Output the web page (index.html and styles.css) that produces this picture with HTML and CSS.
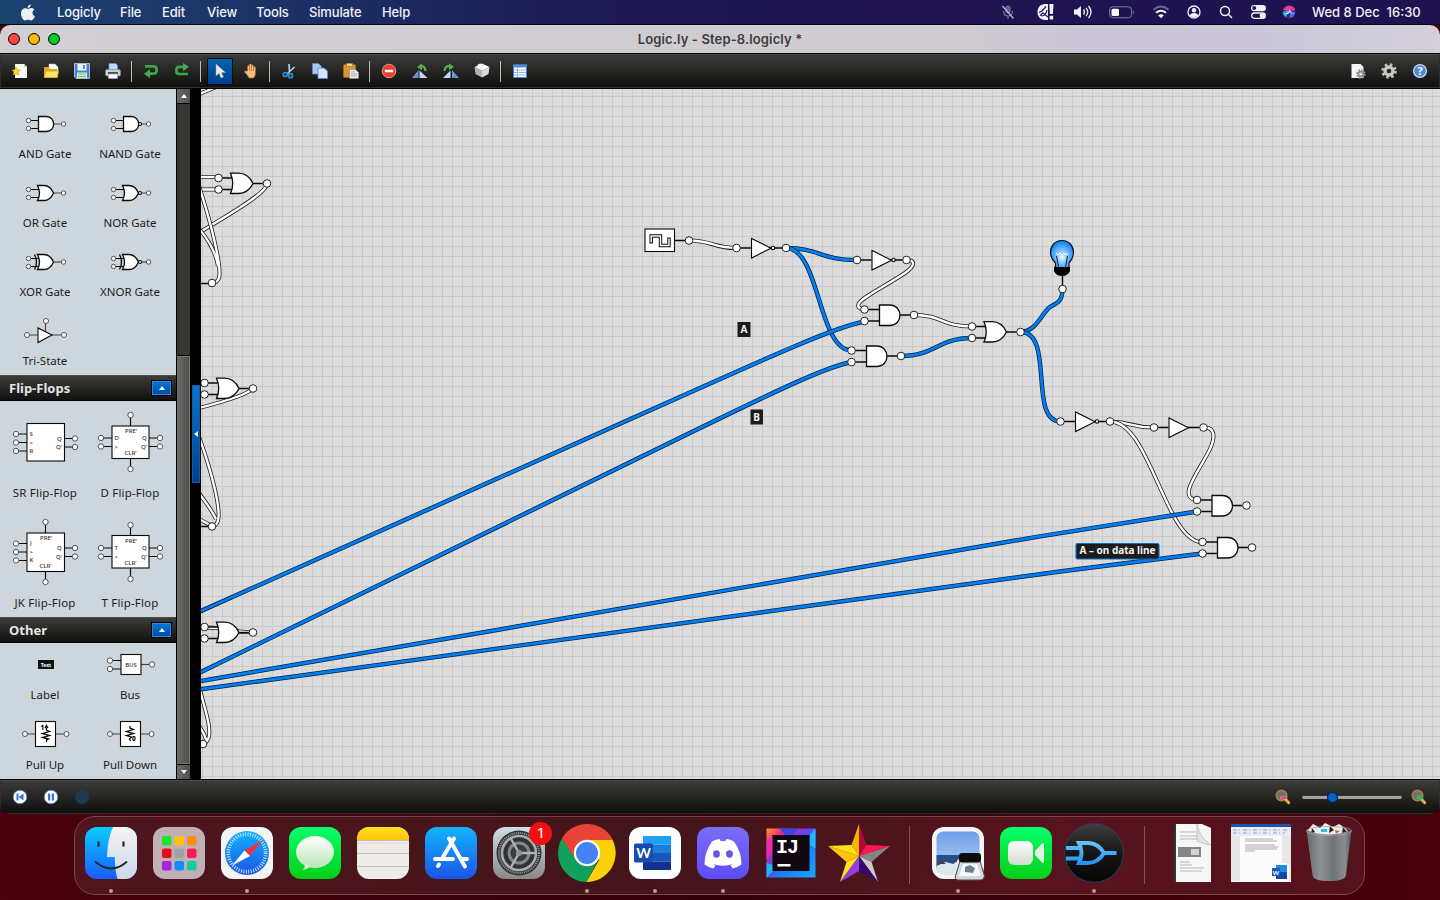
FILE: index.html
```html
<!DOCTYPE html>
<html lang="en">
<head>
<meta charset="utf-8">
<title>Logic.ly - Step-8.logicly *</title>
<link rel="stylesheet" href="styles.css">
</head>
<body>
<svg class="defs" width="0" height="0">
  <defs>
    <linearGradient id="gBlue" x1="0" y1="0" x2="0" y2="1"><stop offset="0" stop-color="#12b4fb"/><stop offset="1" stop-color="#1a55e6"/></linearGradient>
    <linearGradient id="gFinder" x1="0" y1="0" x2="0" y2="1"><stop offset="0" stop-color="#0accff"/><stop offset="1" stop-color="#1a5cff"/></linearGradient>
    <linearGradient id="gFace" x1="0" y1="0" x2="0" y2="1"><stop offset="0" stop-color="#f4f3f3"/><stop offset="1" stop-color="#cdd8e8"/></linearGradient>
    <linearGradient id="gGreen" x1="0" y1="0" x2="0" y2="1"><stop offset="0" stop-color="#06ff6c"/><stop offset="1" stop-color="#03cf16"/></linearGradient>
    <linearGradient id="gWhite" x1="0" y1="0" x2="0" y2="1"><stop offset="0" stop-color="#ffffff"/><stop offset="1" stop-color="#d0dcd0"/></linearGradient>
    <linearGradient id="gBubble" x1="0" y1="0" x2="0" y2="1"><stop offset="0" stop-color="#ffffff"/><stop offset="1" stop-color="#b9e6b9"/></linearGradient>
    <linearGradient id="gYellow" x1="0" y1="0" x2="0" y2="1"><stop offset="0" stop-color="#ffe21a"/><stop offset="1" stop-color="#ffc20a"/></linearGradient>
    <linearGradient id="gDiscord" x1="0" y1="0" x2="0" y2="1"><stop offset="0" stop-color="#7b6df5"/><stop offset="1" stop-color="#5b4df6"/></linearGradient>
    <linearGradient id="gMetal" x1="0" y1="0" x2="0" y2="1"><stop offset="0" stop-color="#cfdde5"/><stop offset="1" stop-color="#8b8987"/></linearGradient>
    <linearGradient id="gIJ" x1="0" y1="0" x2="1" y2="1"><stop offset="0" stop-color="#ff9a2a"/><stop offset=".2" stop-color="#f5257c"/><stop offset=".42" stop-color="#6a3df0"/><stop offset=".6" stop-color="#1d7cf5"/><stop offset="1" stop-color="#16a8f8"/></linearGradient>
    <linearGradient id="gSky" x1="0" y1="0" x2="0" y2="1"><stop offset="0" stop-color="#6e9fea"/><stop offset="1" stop-color="#b9d2f5"/></linearGradient>
    <linearGradient id="gBin" x1="0" y1="0" x2="1" y2="0"><stop offset="0" stop-color="#66696b"/><stop offset=".3" stop-color="#8d9193"/><stop offset=".6" stop-color="#6f7375"/><stop offset=".85" stop-color="#8a8e90"/><stop offset="1" stop-color="#55585a"/></linearGradient>
    <linearGradient id="gGate" gradientUnits="userSpaceOnUse" x1="0" y1="14" x2="0" y2="39"><stop offset="0" stop-color="#6cc4ff"/><stop offset="1" stop-color="#1e8cf5"/></linearGradient>
    <linearGradient id="gDisc" x1="0" y1="0" x2="0" y2="1"><stop offset="0" stop-color="#3d3d3f"/><stop offset=".5" stop-color="#161616"/><stop offset="1" stop-color="#050505"/></linearGradient>
    <radialGradient id="gBulb" cx=".5" cy=".6" r=".6"><stop offset="0" stop-color="#ffffff"/><stop offset=".35" stop-color="#8cc8ff"/><stop offset="1" stop-color="#0080f8"/></radialGradient>
    <pattern id="grid" x="202" y="96" width="10" height="10" patternUnits="userSpaceOnUse"><path class="grid-line" d="M0 0h10v1H1v9H0z"/></pattern>

    <g id="pin"><circle class="pin" r="3.800"/></g>
    <g id="and">
      <path class="lead" d="M-46 -5.500H-34M-46 6H-34M-14 0H-4"/>
      <path class="body" d="M-34.500 -10h10c14 0 14 20.500 0 20.500h-10z"/>
      <use href="#pin"/><use href="#pin" x="-49.500" y="-5.500"/><use href="#pin" x="-49.500" y="6"/>
    </g>
    <g id="or">
      <path class="lead" d="M-45 -5.500H-34M-45 6H-34M-14 0H-4"/>
      <path class="body" d="M-36.500 -10.300h8c8 0 12 5 14.500 10.300c-2.500 5 -6.500 10 -14.500 10h-8q4.500 -10 0 -20.300z"/>
      <use href="#pin"/><use href="#pin" x="-48.500" y="-5.500"/><use href="#pin" x="-48.500" y="6"/>
    </g>
    <g id="buf">
      <path class="lead" d="M-46 0H-35M-16 0H-4"/>
      <path class="body thin" d="M-34.500 -9.500V10L-15 .2z"/>
      <use href="#pin"/><use href="#pin" x="-49.500"/>
    </g>
    <g id="not"><use href="#buf"/><circle class="body thin" cx="-13" cy="0" r="1.700"/></g>

    <path id="w1" d="M689 240.500C712 240.500 713 248 736.500 248"/>
    <path id="w2" d="M786 248C820 248 820 260 857 260"/>
    <path id="w3" d="M786 248C820 248 818 350.500 851.500 350.500"/>
    <path id="w4" d="M906.500 260C916 260 915 266 905 273C884 287 862 297 858.500 304Q857 309 864.500 309.500"/>
    <path id="w5" d="M914 315C943 315 941 326.500 972 326.500"/>
    <path id="w6" d="M901 356C936 356 937 338 972 338"/>
    <path id="w7" d="M1020.500 332C1037 331 1040 315 1050 307C1056 303 1062.500 303 1062.500 289"/>
    <path id="w8" d="M1020.500 332C1055 332 1028 421.500 1060.500 421.500"/>
    <path id="w9" d="M195 613.700L630 419.300C780 352 835 327 864.500 321.500"/>
    <path id="w10" d="M195 675L698 429C790 384 830 366 851.500 362"/>
    <path id="w11" d="M195 682L1040 536.300L1197 511.500"/>
    <path id="w12" d="M195 690L1060 571.500L1202.500 553.500"/>
    <path id="w13" d="M1110 421.500C1130 421.500 1130 427.500 1154 427.500"/>
    <path id="w14" d="M1110 421.500C1150 421.500 1165 541 1202.500 542.500"/>
    <path id="w15" d="M1203.500 427.500C1216 427 1215 438 1210 449C1200 470 1176 498 1197 500"/>
    <path id="w16" d="M195 177h23M195 189.500h23M195 96L216 87"/>
    <path id="w17" d="M267 183.500C268 193 220 220 195 235"/>
    <path id="w18" d="M197 180C212 225 222 268 219 278Q217 283 212 283M195 225C206 235 216 252 218 266"/>
    <path id="w19" d="M253 388.500C246 396 215 404 195 409"/>
    <path id="w20" d="M198 434C212 472 222 512 217.500 522Q216 526 212 526M195 488Q212 510 216 519M195 517L212 526"/>
    <path id="w21" d="M199 686C204 707 212 728 208.500 738Q206 744 203 744M197 723Q204 732 206.500 741"/>
    <path id="w22" d="M204 627.500C225 627 230 632 253 632.500"/>
  </defs>
</svg>

<header class="menubar">
  <svg class="apple" width="16" height="20" viewBox="0 0 16 20"><path fill="#eceef2" d="M10.900 1.500c.1 1.900-1.600 3.600-3.300 3.500C7.400 3.200 9.100 1.600 10.900 1.500zM8 5.900c.9 0 1.700-.8 3.200-.8 1.300 0 2.500.7 3.100 1.700-2.700 1.500-2.200 5.300.6 6.400-.6 1.700-2.200 4.300-3.700 4.300-1.200 0-1.600-.7-3-.7s-1.900.7-3 .7C3 17.500 1 13.700 1 10.500 1 7.200 3.100 5.200 5.200 5.200 6.500 5.200 7.200 5.900 8 5.900z"/></svg>
  <nav class="menus"><span>Logicly</span><span>File</span><span>Edit</span><span>View</span><span>Tools</span><span>Simulate</span><span>Help</span></nav>
  <div class="tray">
    <svg width="14" height="16" viewBox="0 0 14 16"><g fill="none" stroke="#76709a" stroke-width="1.200"><rect x="5" y="2" width="4" height="7" rx="2" fill="#5e5788"/><path d="M2.500 7q0 5 4.500 5t4.500-5M7 12v3"/></g><path stroke="#b9b6ca" stroke-width="1.300" d="M1.500 2l11 12.500"/></svg>
    <svg width="18" height="17" viewBox="0 0 18 17"><path fill="#f0f0f5" d="M8 0h3v16H8C-2 16-2 0 8 0z"/><path fill="none" stroke="#23175a" stroke-width="1.200" d="M2 8.500l3-1.500 4-4.500M4 12q5 0 6-6M3 11.500l3-2.500 5 4"/><path fill="#f0f0f5" d="M12.300 0h4.200l-.6 10h-3zM12.600 11.800h3.600v3.700h-3.600z"/></svg>
    <svg width="20" height="14" viewBox="0 0 20 14"><path fill="#f0f0f5" d="M1 4.500h3l4-3.500v12L4 9.500H1z"/><path fill="none" stroke="#f0f0f5" stroke-width="1.300" d="M10.500 4.500q2 2.500 0 5M13 2.800q3.500 4.200 0 8.400M15.500 1q5 6 0 12"/></svg>
    <svg width="26" height="13" viewBox="0 0 26 13"><rect x=".6" y=".8" width="22" height="11" rx="3.200" fill="none" stroke="#837c9f"/><rect x="2.500" y="2.700" width="7.500" height="7.200" rx="1.500" fill="#fff"/><path fill="#837c9f" d="M24 4.500q2 1.800 0 3.600z"/></svg>
    <svg width="18" height="14" viewBox="0 0 18 14"><g fill="none" stroke-width="1.900"><path stroke="#6f688f" d="M1.500 4.700Q9-1.700 16.500 4.700"/><path stroke="#f0f0f5" d="M4 7.800q5-4 10 0"/></g><path fill="#f0f0f5" d="M6.200 10.200q2.800-2 5.600 0L9 13.200z"/></svg>
    <svg width="14" height="14" viewBox="0 0 14 14"><circle cx="7" cy="7" r="6" fill="none" stroke="#f0f0f5" stroke-width="1.300"/><circle cx="7" cy="5.200" r="2.200" fill="#f0f0f5"/><path fill="#f0f0f5" d="M3 10.800q0-2.800 4-2.800t4 2.800Q7 13.800 3 10.800z"/></svg>
    <svg width="14" height="14" viewBox="0 0 14 14"><g fill="none" stroke="#f0f0f5" stroke-width="1.500"><circle cx="6" cy="6" r="4.500"/><path d="M9.300 9.300L13 13"/></g></svg>
    <svg width="15" height="14" viewBox="0 0 15 14"><rect x="0" y="0" width="15" height="6.200" rx="3.100" fill="#f0f0f5"/><circle cx="3.200" cy="3.100" r="2" fill="#23175a"/><rect x=".7" y="8" width="13.600" height="5.300" rx="2.600" fill="none" stroke="#f0f0f5" stroke-width="1.300"/><circle cx="11.300" cy="10.600" r="2.600" fill="#f0f0f5"/></svg>
    <svg width="14" height="14" viewBox="0 0 14 14"><circle cx="7" cy="7" r="6.700" fill="#3a2a73"/><path fill="#e93a8d" d="M1 5Q4 0 9 1q4 1 4 4L7 6z"/><path fill="#27b7de" d="M1 7l6-2-3 7Q1 11 1 7z"/><path fill="#3d6cf0" d="M8 6l5 1q0 5-5 6z"/><path fill="#fff" d="M3 9q4-1 5-5 0 4 4 5-3 0-4-2-2 3-5 2z"/></svg>
    <span class="clock">Wed 8 Dec&nbsp; 16:30</span>
  </div>
</header>

<main class="window">
  <div class="titlebar">
    <div class="lights"><i class="red"></i><i class="amber"></i><i class="green"></i></div>
    <h1>Logic.ly - Step-8.logicly *</h1>
  </div>

  <div class="toolbar">
    <div class="tools">
      <span class="tool"><svg viewBox="0 0 16 16"><path fill="#f7f7f5" d="M3 1h9l3 3v11H3z"/><path fill="#ccc" d="M12 1v3h3z"/><path fill="#ffd91f" stroke="#c99700" stroke-width=".5" d="M4 4l1.300 2.700 3 .4-2.200 2 .6 3L4 10.700 1.300 12.100l.6-3L0 7.100l2.800-.4z"/></svg></span>
      <span class="tool"><svg viewBox="0 0 16 16"><path fill="#fff" stroke="#ccc" stroke-width=".5" d="M6 1h6l3 3v6H6z"/><path fill="#e0a81c" d="M1 4h5l1 2h7v9H1z"/><path fill="#ffe56b" stroke="#cf9a14" stroke-width=".7" d="M3 8h12.500l-1 6.500H1z"/></svg></span>
      <span class="tool"><svg viewBox="0 0 16 16"><path fill="#4d80d4" stroke="#bcd0f2" stroke-width=".8" d="M.5.500h15v15H2L.5 14z"/><path fill="#e9f0fa" d="M3.500 1h9v6.500h-9z"/><path fill="#5c8bd8" d="M9 2h2v4H9z"/><path fill="#e2f5d9" d="M3 9.500h10V15H3z"/><path stroke="#5fbf4c" d="M4 11h8M4 13.500h8"/></svg></span>
      <span class="tool"><svg viewBox="0 0 16 16"><path fill="#b9dcff" stroke="#5f94cf" stroke-width=".7" d="M4 .5h7l1.500 2V8H4z"/><rect x=".5" y="6.500" width="15" height="6.500" rx="1.500" fill="#cfcfcf" stroke="#888" stroke-width=".7"/><path fill="#4b4b4b" d="M3 9h10v2H3z"/><path fill="#f4f8ff" stroke="#8aa9d0" stroke-width=".6" d="M3.500 11h9v4.500h-9z"/></svg></span>
      <i class="sep"></i>
      <span class="tool"><svg viewBox="0 0 16 16"><path fill="none" stroke="#3fa545" stroke-width="2.700" d="M2 3.300h8.500q3.200 0 3.200 3.700t-3.200 3.700H6"/><path fill="#45ab4a" d="M7 6.300v9L1 10.800z"/></svg></span>
      <span class="tool"><svg viewBox="0 0 16 16"><path fill="none" stroke="#3fa545" stroke-width="2.700" d="M10 3.800H5.500q-3.200 0-3.200 3.600T5.500 11h8.500"/><path fill="#45ab4a" d="M9 0v8.200l6-4.400z"/></svg></span>
      <i class="sep"></i>
      <span class="tool selected"><svg viewBox="0 0 16 16"><path fill="#ececec" stroke="#999" stroke-width=".5" d="M4 1v12l3-2.800L9 15l2.500-1L9.500 9.500H13.500z"/></svg></span>
      <span class="tool"><svg viewBox="0 0 16 16"><path fill="#f2bd83" stroke="#a6622a" stroke-width=".8" d="M4.500 8V3q1-1.500 2 0V1.500q1-1.300 2 0V2.500q1.200-1 2 0V4q1.300-1 2 .3V10q0 3-2 5H6Q5 12.500 1.500 9q0-1.600 1.500-1z"/><path stroke="#a6622a" stroke-width=".7" d="M6.500 3v5M8.500 2.500V8M10.500 4v4"/></svg></span>
      <i class="sep"></i>
      <span class="tool"><svg viewBox="0 0 16 16"><path stroke="#a9d2ee" stroke-width="1.700" d="M8 1l.5 8M13.500 4L6 11"/><g fill="none" stroke="#2a8fd8" stroke-width="1.700"><circle cx="4.200" cy="11.500" r="2"/><circle cx="9.500" cy="12.700" r="2"/></g></svg></span>
      <span class="tool"><svg viewBox="0 0 16 16"><path fill="#a9c8ef" stroke="#5a89c9" stroke-width=".8" d="M.5.500h6l3 3v7.500h-9z"/><path fill="#d3e5fb" stroke="#5a89c9" stroke-width=".8" d="M6 5h6l3.500 3v7.500H6z"/></svg></span>
      <span class="tool"><svg viewBox="0 0 16 16"><rect x=".5" y="1.500" width="12" height="13" rx="1" fill="#d9952f" stroke="#9c6413" stroke-width=".8"/><rect x="3.500" y=".3" width="6" height="3" fill="#e8d28e" stroke="#8a7431" stroke-width=".5"/><path fill="#eeeeec" stroke="#888" stroke-width=".6" d="M6.500 6.500h6l3 3v6h-9z"/><path stroke="#999" stroke-width=".8" d="M8 9h4M8 11h6M8 13h6"/></svg></span>
      <i class="sep"></i>
      <span class="tool"><svg viewBox="0 0 16 16"><circle cx="8" cy="8" r="6.800" fill="#e8402f" stroke="#ffaaa0" stroke-width=".8"/><path fill="#fff" d="M3.800 6.800h8.400v2.500H3.800z"/></svg></span>
      <span class="tool"><svg viewBox="0 0 16 16"><path fill="#6894dc" d="M0 15L6.500 7v8z"/><path fill="#c5d9f7" d="M7.500 7.500L15.500 15h-8z"/><path fill="none" stroke="#4fb24f" stroke-width="2.300" d="M8 3.500Q13 2 13.500 8"/><path fill="#4fb24f" d="M5 4L10 .2v7z"/></svg></span>
      <span class="tool"><svg viewBox="0 0 16 16"><path fill="#c5d9f7" d="M0 15L7.500 7.500V15z"/><path fill="#6894dc" d="M9 7v8h7z"/><path fill="none" stroke="#4fb24f" stroke-width="2.300" d="M7.500 3.500Q2 2 1.500 8"/><path fill="#4fb24f" d="M11 4L6 .2v7z"/></svg></span>
      <span class="tool"><svg viewBox="0 0 16 16"><path fill="#f2f2f2" d="M8 .5l7.500 3.500L8 8 .5 4z"/><path fill="#b4b4b4" d="M.5 4L8 8v6.500L1.500 11z"/><path fill="#dadada" d="M15.500 4L8 8v6.500l6.500-3.500z"/><path fill="#fff" d="M3 2l3-1.500 2 1L5 3zM9 4.500l3-1.500 2 1-3 1.500z"/></svg></span>
      <i class="sep"></i>
      <span class="tool"><svg viewBox="0 0 16 16"><path fill="#fff" stroke="#4a83cc" d="M1.500 2h13v12.500h-13z"/><path fill="#4a8be0" d="M1 1.500h14v3H1z"/><path stroke="#8ab0dd" stroke-width=".9" d="M2 7h12M2 9.500h12M2 12h12M5.500 4.500V14"/></svg></span>
    </div>
    <div class="tools right">
      <span class="tool"><svg viewBox="0 0 16 16"><path fill="#f6f6f4" d="M1.500 1h9l3 3v11h-12z"/><circle cx="10.800" cy="11" r="3.600" fill="none" stroke="#999" stroke-width="2.400" stroke-dasharray="1.600 1.230"/><circle cx="10.800" cy="11" r="2.400" fill="#eee" stroke="#8a8a8a" stroke-width="1.600"/></svg></span>
      <span class="tool"><svg viewBox="0 0 16 16"><circle cx="8" cy="8" r="6.300" fill="none" stroke="#bdbdbb" stroke-width="3" stroke-dasharray="2.500 2.450"/><circle cx="8" cy="8" r="4" fill="none" stroke="#c9c9c6" stroke-width="3.300"/></svg></span>
      <span class="tool"><svg viewBox="0 0 16 16"><circle cx="8" cy="8" r="6.400" fill="#4f89d6" stroke="#c3dafa" stroke-width="1.300"/><text class="help" x="8" y="12" text-anchor="middle">?</text></svg></span>
    </div>
  </div>

  <div class="workspace">
    <aside class="palette">
      <section class="group gates">
        <figure><svg width="85" height="40" viewBox="3 104 85 40"><path class="plead" d="M30 120.500h9M30 128.500h9"/><path class="pout" d="M53 124h9"/><path class="body" d="M38.500 116.500h8c9.500 0 9.500 15 0 15h-8z"/><circle class="pp" cx="28.500" cy="120.500" r="2.200"/><circle class="pp" cx="28.500" cy="128.500" r="2.200"/><circle class="pp" cx="63.500" cy="124" r="2.200"/></svg><figcaption>AND Gate</figcaption></figure>
        <figure><svg width="85" height="40" viewBox="3 104 85 40"><path class="plead" d="M30 120.500h9M30 128.500h9"/><path class="pout" d="M53 124h9"/><path class="body" d="M38.500 116.500h8c9.500 0 9.500 15 0 15h-8z"/><circle class="body thin" cx="55" cy="124" r="1.500"/><circle class="pp" cx="28.500" cy="120.500" r="2.200"/><circle class="pp" cx="28.500" cy="128.500" r="2.200"/><circle class="pp" cx="63.500" cy="124" r="2.200"/></svg><figcaption>NAND Gate</figcaption></figure>
        <figure><svg width="85" height="40" viewBox="3 104 85 40"><path class="plead" d="M30 120.500h10M30 128.500h10"/><path class="pout" d="M53 124h9"/><path class="body" d="M37.500 116.500h6.500c5.500 0 8 4 9.500 7.500c-1.500 3.500-4 7.500-9.500 7.500h-6.500q4-7.500 0-15z"/><circle class="pp" cx="28.500" cy="120.500" r="2.200"/><circle class="pp" cx="28.500" cy="128.500" r="2.200"/><circle class="pp" cx="63.500" cy="124" r="2.200"/></svg><figcaption>OR Gate</figcaption></figure>
        <figure><svg width="85" height="40" viewBox="3 104 85 40"><path class="plead" d="M30 120.500h10M30 128.500h10"/><path class="pout" d="M53 124h9"/><path class="body" d="M37.500 116.500h6.500c5.500 0 8 4 9.500 7.500c-1.500 3.500-4 7.500-9.500 7.500h-6.500q4-7.500 0-15z"/><circle class="body thin" cx="55" cy="124" r="1.500"/><circle class="pp" cx="28.500" cy="120.500" r="2.200"/><circle class="pp" cx="28.500" cy="128.500" r="2.200"/><circle class="pp" cx="63.500" cy="124" r="2.200"/></svg><figcaption>NOR Gate</figcaption></figure>
        <figure><svg width="85" height="40" viewBox="3 104 85 40"><path class="plead" d="M30 120.500h10M30 128.500h10"/><path class="pout" d="M53 124h9"/><path class="body" d="M37.500 116.500h6.500c5.500 0 8 4 9.500 7.500c-1.500 3.500-4 7.500-9.500 7.500h-6.500q4-7.500 0-15z"/><path class="line" d="M34.500 116.500q4 7.500 0 15"/><circle class="pp" cx="28.500" cy="120.500" r="2.200"/><circle class="pp" cx="28.500" cy="128.500" r="2.200"/><circle class="pp" cx="63.500" cy="124" r="2.200"/></svg><figcaption>XOR Gate</figcaption></figure>
        <figure><svg width="85" height="40" viewBox="3 104 85 40"><path class="plead" d="M30 120.500h10M30 128.500h10"/><path class="pout" d="M53 124h9"/><path class="body" d="M37.500 116.500h6.500c5.500 0 8 4 9.500 7.500c-1.500 3.500-4 7.500-9.500 7.500h-6.500q4-7.500 0-15z"/><path class="line" d="M34.500 116.500q4 7.500 0 15"/><circle class="body thin" cx="55" cy="124" r="1.500"/><circle class="pp" cx="28.500" cy="120.500" r="2.200"/><circle class="pp" cx="28.500" cy="128.500" r="2.200"/><circle class="pp" cx="63.500" cy="124" r="2.200"/></svg><figcaption>XNOR Gate</figcaption></figure>
        <figure><svg width="85" height="40" viewBox="3 311 85 40"><path class="pout" d="M29 335h9M52 335h10M45.500 323v8"/><path class="body thin" d="M38 328v14.500L52 335z"/><circle class="pp" cx="27" cy="335" r="2.500"/><circle class="pp" cx="64" cy="335" r="2.500"/><circle class="pp" cx="46" cy="321" r="2.500"/></svg><figcaption>Tri-State</figcaption></figure>
      </section>

      <h2>Flip-Flops<span class="fold"></span></h2>
      <section class="group flops">
        <figure><svg class="ff" width="85" height="82" viewBox="3 401 85 82"><path class="plead" d="M18 434h9M18 442.500h9M18 451h9M64 438.500h9M64 447h9"/><rect class="body thin" x="27" y="423.500" width="37.500" height="37.500"/><circle class="pp" cx="16" cy="434" r="2.700"/><circle class="pp" cx="16" cy="442.500" r="2.700"/><circle class="pp" cx="16" cy="451" r="2.700"/><circle class="pp" cx="75" cy="438.500" r="2.700"/><circle class="pp" cx="75" cy="447" r="2.700"/><text x="29.500" y="436">S</text><text x="29.500" y="444.500">&gt;</text><text x="29.500" y="453">R</text><text x="57" y="440.500">Q</text><text x="56" y="449">Q'</text></svg><figcaption>SR Flip-Flop</figcaption></figure>
        <figure><svg class="ff" width="85" height="82" viewBox="3 401 85 82"><path class="plead" d="M18 438h9M18 446.500h9M64 438h9M64 446.500h9M45.500 417v9M45.500 458v9"/><rect class="body thin" x="27" y="426" width="37" height="32.500"/><circle class="pp" cx="16" cy="438" r="2.700"/><circle class="pp" cx="16" cy="446.500" r="2.700"/><circle class="pp" cx="75" cy="438" r="2.700"/><circle class="pp" cx="75" cy="446.500" r="2.700"/><circle class="pp" cx="45.500" cy="415" r="2.700"/><circle class="pp" cx="45.500" cy="469" r="2.700"/><text x="29.500" y="440">D</text><text x="29.500" y="448.500">&gt;</text><text x="57" y="440">Q</text><text x="56" y="448.500">Q'</text><text x="40" y="433">PRE'</text><text x="39.500" y="455">CLR'</text></svg><figcaption>D Flip-Flop</figcaption></figure>
        <figure><svg class="ff" width="85" height="82" viewBox="3 511 85 82"><path class="plead" d="M18 543.500h9M18 552h9M18 560.500h9M64 548h9M64 556.500h9M45.500 524v9M45.500 571v9"/><rect class="body thin" x="27" y="533" width="37.500" height="38.500"/><circle class="pp" cx="16" cy="543.500" r="2.700"/><circle class="pp" cx="16" cy="552" r="2.700"/><circle class="pp" cx="16" cy="560.500" r="2.700"/><circle class="pp" cx="75" cy="548" r="2.700"/><circle class="pp" cx="75" cy="556.500" r="2.700"/><circle class="pp" cx="45.500" cy="522" r="2.700"/><circle class="pp" cx="45.500" cy="582" r="2.700"/><text x="30" y="545">J</text><text x="29.500" y="554">&gt;</text><text x="29.500" y="562">K</text><text x="57" y="550">Q</text><text x="56" y="558.500">Q'</text><text x="40" y="540">PRE'</text><text x="39.500" y="568">CLR'</text></svg><figcaption>JK Flip-Flop</figcaption></figure>
        <figure><svg class="ff" width="85" height="82" viewBox="3 511 85 82"><path class="plead" d="M18 548h9M18 556.500h9M64 548h9M64 556.500h9M45.500 527v9M45.500 568v9"/><rect class="body thin" x="27" y="535.500" width="37" height="32.500"/><circle class="pp" cx="16" cy="548" r="2.700"/><circle class="pp" cx="16" cy="556.500" r="2.700"/><circle class="pp" cx="75" cy="548" r="2.700"/><circle class="pp" cx="75" cy="556.500" r="2.700"/><circle class="pp" cx="45.500" cy="525" r="2.700"/><circle class="pp" cx="45.500" cy="579" r="2.700"/><text x="29.500" y="550">T</text><text x="29.500" y="558.500">&gt;</text><text x="57" y="550">Q</text><text x="56" y="558.500">Q'</text><text x="40" y="543">PRE'</text><text x="39.500" y="565">CLR'</text></svg><figcaption>T Flip-Flop</figcaption></figure>
      </section>

      <h2>Other<span class="fold"></span></h2>
      <section class="group other">
        <figure><svg class="ff" width="85" height="42" viewBox="3 643 85 42"><rect x="38" y="660" width="16" height="9" fill="#111"/><text class="chip" x="46" y="666.500" text-anchor="middle">Text</text></svg><figcaption>Label</figcaption></figure>
        <figure><svg class="ff" width="85" height="42" viewBox="3 643 85 42"><path class="plead" d="M27 660.500h10M27 669h10"/><path class="pout" d="M56 664.500h9"/><rect class="body thin" x="36" y="654.500" width="20" height="20"/><circle class="pp" cx="25" cy="660.500" r="2.700"/><circle class="pp" cx="25" cy="669" r="2.700"/><circle class="pp" cx="67" cy="664.500" r="2.700"/><text x="46" y="666.500" text-anchor="middle">BUS</text></svg><figcaption>Bus</figcaption></figure>
        <figure><svg class="ff" width="85" height="42" viewBox="3 713 85 42"><path class="pout" d="M27 734h9M55 734h9"/><rect class="body thin" x="35.500" y="721.500" width="20" height="25"/><path class="line" d="M46 730l3.500 1.500-7 2 7 2-7 2 6 1.500-2 1v2M46.500 730v-2.500M45 728l1.500-2.500 1.500 2.500"/><text class="bold" x="40.500" y="730">1</text><circle class="pp" cx="25" cy="734" r="2.500"/><circle class="pp" cx="66.500" cy="734" r="2.500"/></svg><figcaption>Pull Up</figcaption></figure>
        <figure><svg class="ff" width="85" height="42" viewBox="3 713 85 42"><path class="pout" d="M27 734h9M55 734h9"/><rect class="body thin" x="35.500" y="721.500" width="20" height="25"/><path class="line" d="M45 726v2l3.500 1.500-7 2 7 2-7 2 5 1.500-2 2 1 2"/><text class="bold" x="47" y="741">0</text><circle class="pp" cx="25" cy="734" r="2.500"/><circle class="pp" cx="66.500" cy="734" r="2.500"/></svg><figcaption>Pull Down</figcaption></figure>
      </section>
    </aside>
    <div class="scrollbar"><i class="up"></i><i class="track"></i><i class="thumb"></i><i class="down"></i></div>
    <div class="splitter"><i></i></div>

    <svg class="canvas" width="1239" height="690" viewBox="201 89 1239 690">
      <rect x="201" y="89" width="1239" height="690" fill="url(#grid)"/>
      <path class="lead" d="M201 283.500h11M201 526.500h11M674 240.500h12M1062.500 276v10"/>
      <g class="off">
        <use href="#w16" class="edge"/><use href="#w16" class="core"/>
        <use href="#w17" class="edge"/><use href="#w17" class="core"/>
        <use href="#w18" class="edge"/><use href="#w18" class="core"/>
        <use href="#w19" class="edge"/><use href="#w19" class="core"/>
        <use href="#w20" class="edge"/><use href="#w20" class="core"/>
        <use href="#w21" class="edge"/><use href="#w21" class="core"/>
        <use href="#w22" class="edge"/><use href="#w22" class="core"/>
        <use href="#w1" class="edge"/><use href="#w1" class="core"/>
        <use href="#w4" class="edge"/><use href="#w4" class="core"/>
        <use href="#w5" class="edge"/><use href="#w5" class="core"/>
      </g>
      <g class="on">
        <use href="#w2" class="edge"/><use href="#w2" class="core"/>
        <use href="#w3" class="edge"/><use href="#w3" class="core"/>
        <use href="#w6" class="edge"/><use href="#w6" class="core"/>
        <use href="#w7" class="edge"/><use href="#w7" class="core"/>
        <use href="#w8" class="edge"/><use href="#w8" class="core"/>
        <use href="#w9" class="edge"/><use href="#w9" class="core"/>
        <use href="#w10" class="edge"/><use href="#w10" class="core"/>
      </g>
      <g class="off">
        <use href="#w13" class="edge"/><use href="#w13" class="core"/>
        <use href="#w14" class="edge"/><use href="#w14" class="core"/>
        <use href="#w15" class="edge"/><use href="#w15" class="core"/>
      </g>
      <g class="on">
        <use href="#w11" class="edge"/><use href="#w11" class="core"/>
        <use href="#w12" class="edge"/><use href="#w12" class="core"/>
      </g>
      <use href="#or" x="267" y="183.500"/><use href="#or" x="253" y="388.500"/><use href="#or" x="253" y="632.500"/>
      <use href="#pin" x="212" y="283"/><use href="#pin" x="212" y="526.500"/><use href="#pin" x="203" y="744"/>
      <rect class="body thin" x="645" y="229" width="29.500" height="22.500"/>
      <path class="clock-edge" d="M651.200 243.500v-7.500h9.300v9.500h8.500v-8"/><path class="clock-core" d="M651.200 242.500v-6.500h9.300v9.500h8.500v-7"/>
      <use href="#pin" x="689" y="240.500"/>
      <use href="#not" x="786" y="248"/><use href="#not" x="906.500" y="260"/><use href="#not" x="1110" y="421.500"/><use href="#buf" x="1203.500" y="427.500"/>
      <use href="#and" x="914" y="315"/><use href="#and" x="901" y="356"/><use href="#and" x="1246.500" y="505.500"/><use href="#and" x="1252" y="547.500"/>
      <use href="#or" x="1020.500" y="332"/>
      <path fill="url(#gBulb)" stroke="#111" stroke-width="1.200" d="M1055.500 268v-5q-5-5-5-10.500c0-6 4-12 11.500-12s11.500 6 11.500 12q0 5.500-4.500 10.500v5z"/>
      <path fill="none" stroke="#123" d="M1058.500 267l-2-11M1065.500 267l2-11"/><path fill="none" stroke="#fff" d="M1056 253l2 2 2-2 2 2 2-2 2 2 2-2"/>
      <path fill="#000" d="M1054 267h16v4q-2 5-8 5t-8-5z"/>
      <use href="#pin" x="1062.500" y="289"/>
      <g class="label"><rect x="737.500" y="322" width="13" height="15"/><text x="744" y="333.300">A</text><rect x="750.500" y="409.500" width="12.500" height="15"/><text x="756.700" y="420.800">B</text>
      <rect class="chosen" x="1076" y="543.500" width="83" height="15.500"/><text x="1117.500" y="554.300" textLength="76">A – on data line</text></g>
    </svg>
  </div>

  <footer class="statusbar">
    <div class="tools">
      <span class="tool"><svg viewBox="0 0 16 16"><circle cx="8" cy="8" r="6.800" fill="#fff" stroke="#4a82cf" stroke-width=".8"/><path fill="#3675d0" d="M4.500 4.500h2v7h-2zM11.500 4.500v7l-5-3.500z"/></svg></span>
      <span class="tool"><svg viewBox="0 0 16 16"><circle cx="8" cy="8" r="6.800" fill="#fff" stroke="#4a82cf" stroke-width=".8"/><path fill="#3675d0" d="M5 4.500h2.200v7H5zM8.800 4.500H11v7H8.800z"/></svg></span>
      <span class="tool"><svg viewBox="0 0 16 16"><circle cx="8" cy="8" r="7" fill="#1d3a54"/></svg></span>
    </div>
    <div class="zoomer">
      <svg width="16" height="16" viewBox="0 0 16 16"><circle cx="6.500" cy="6.500" r="5.300" fill="#66727c" stroke="#bf8426" stroke-width="1.400"/><path stroke="#eaa757" stroke-width="3" stroke-linecap="round" d="M11 11l2.800 2.800"/><path fill="#f0343a" stroke="#fbb" stroke-width=".5" d="M5.500 7.700h6.500V10H5.500z"/></svg>
      <div class="slider"><i></i></div>
      <svg width="16" height="16" viewBox="0 0 16 16"><circle cx="6.500" cy="6.500" r="5.300" fill="#66727c" stroke="#bf8426" stroke-width="1.400"/><path stroke="#eaa757" stroke-width="3" stroke-linecap="round" d="M11 11l2.800 2.800"/><path stroke="#35b556" stroke-width="2.400" d="M9 5.500v6.500M5.700 8.700h6.600"/></svg>
    </div>
  </footer>
</main>

<div class="dock">
  <span class="app run"><svg viewBox="0 0 52 52"><rect width="52" height="52" rx="12" fill="url(#gFinder)"/><path fill="url(#gFace)" d="M28 0h12a12 12 0 0 1 12 12v28a12 12 0 0 1-12 12h-7.500q-2.500-8-2.800-22H22Q22.500 12 28 0z"/><path fill="none" stroke="#20252c" stroke-width="1.800" stroke-linecap="round" d="M10.500 35q16 13 31 0"/><path stroke="#20252c" stroke-width="2.200" d="M13.500 14.500v5M38.500 14.500v5"/></svg></span>
  <span class="app"><svg viewBox="0 0 52 52"><rect width="52" height="52" rx="12" fill="#c0b0b6"/><rect x="9" y="9" width="9.500" height="9.500" rx="2" fill="#16e52c"/><rect x="21.500" y="9" width="9.500" height="9.500" rx="2" fill="#fcc00e"/><rect x="34" y="9" width="9.500" height="9.500" rx="2" fill="#fd8d0c"/><rect x="9" y="21.500" width="9.500" height="9.500" rx="2" fill="#e80d16"/><rect x="21.500" y="21.500" width="9.500" height="9.500" rx="2" fill="#9aa3a8"/><rect x="34" y="21.500" width="9.500" height="9.500" rx="2" fill="#fb1c55"/><rect x="9" y="34" width="9.500" height="9.500" rx="2" fill="#a823dc"/><rect x="21.500" y="34" width="9.500" height="9.500" rx="2" fill="#118cfb"/><rect x="34" y="34" width="9.500" height="9.500" rx="2" fill="#13cc97"/></svg></span>
  <span class="app run"><svg viewBox="0 0 52 52"><rect width="52" height="52" rx="12" fill="#f4f4f4"/><circle cx="26" cy="26" r="22" fill="url(#gBlue)"/><circle cx="26" cy="26" r="18.700" fill="none" stroke="#d9efff" stroke-width="3.600" stroke-dasharray=".9 1.550"/><path fill="#f5303a" d="M42 13L29 29l-5.500-5.500z"/><path fill="#fff" d="M11 38.500L23.500 23.500 29 29z"/></svg></span>
  <span class="app"><svg viewBox="0 0 52 52"><rect width="52" height="52" rx="12" fill="url(#gGreen)"/><ellipse cx="26" cy="25" rx="19" ry="16" fill="url(#gBubble)"/><path fill="#d3f1d3" d="M16 37q0 4-2.500 6 5-.5 8-4z"/></svg></span>
  <span class="app"><svg viewBox="0 0 52 52"><rect width="52" height="52" rx="12" fill="#eeece9"/><path fill="url(#gYellow)" d="M0 13v-1A12 12 0 0 1 12 0h28a12 12 0 0 1 12 12v1z"/><path stroke="#c4c0bc" d="M0 13.500h52M0 26.500h52M0 39.500h52"/><path stroke="#bcb8b3" stroke-dasharray="1 1.500" d="M1 16h50"/></svg></span>
  <span class="app"><svg viewBox="0 0 52 52"><rect width="52" height="52" rx="12" fill="url(#gBlue)"/><g stroke="#fff" stroke-width="4" stroke-linecap="round"><path d="M29 11.500L18 30M24 11.500l16 28M10 32h18M36 32h6M14 37.500l-1 1.500"/></g></svg></span>
  <span class="app"><svg viewBox="0 0 52 52"><rect width="52" height="52" rx="12" fill="url(#gMetal)"/><circle cx="26" cy="26" r="22.500" fill="#303234"/><circle cx="26" cy="26" r="20" fill="none" stroke="#999c9e" stroke-width="2" stroke-dasharray="1.100 1"/><circle cx="26" cy="26" r="17" fill="none" stroke="#a9abac" stroke-width="2.600"/><circle cx="26" cy="26" r="10" fill="#3a3c3e" stroke="#85888a" stroke-width="3"/><path stroke="#b0b2b3" stroke-width="2.400" d="M26 26h17M26 26l-8.500-15M26 26l-8.500 15"/><circle cx="26" cy="26" r="3" fill="#909395"/></svg><b class="badge">1</b></span>
  <span class="app run"><svg viewBox="0 0 52 52"><path fill="#ea4335" d="M.9 11.500A29 29 0 0 1 51.200 11.500L52 13H26L14 33z"/><path fill="#0fa15b" d="M.9 11.500A29 29 0 0 0 25.500 55L37.500 32 14.500 32z"/><path fill="#fdd108" d="M25.500 55A29 29 0 0 0 51.600 13H26L38 33z"/><circle cx="26" cy="26" r="13.200" fill="#fff"/><circle cx="26" cy="26" r="11" fill="#4682f5"/></svg></span>
  <span class="app run"><svg viewBox="0 0 52 52"><rect width="52" height="52" rx="12" fill="#fff"/><path fill="#1fa0f2" d="M14 9h28v8.500H14z"/><path fill="#1b80dc" d="M14 17.500h28V26H14z"/><path fill="#1659bd" d="M14 26h28v8.500H14z"/><path fill="#113290" d="M14 34.500h28V43H14z"/><rect x="5" y="16.500" width="19" height="19" rx="1.500" fill="#174bb0"/><text class="word" x="14.500" y="31" text-anchor="middle">W</text></svg></span>
  <span class="app run"><svg viewBox="0 0 52 52"><rect width="52" height="52" rx="12" fill="url(#gDiscord)"/><path fill="#fff" d="M15 14.500q4-2.200 7.500-2.500l1.200 2.300q2.300-.4 4.600 0l1.200-2.300q3.500.3 7.500 2.500 7.500 10.500 7.500 23-4 3-9 4l-2-3.200 3-1.600q-10.500 4-21 0l3 1.600-2 3.200q-5-1-9-4 0-12.500 7.500-23z"/><ellipse cx="19.500" cy="27" rx="3.400" ry="3.700" fill="#6556e0"/><ellipse cx="32.500" cy="27" rx="3.400" ry="3.700" fill="#6556e0"/></svg></span>
  <span class="app"><svg viewBox="0 0 52 52"><path fill="url(#gIJ)" d="M1.500 1.500h49v49h-49z"/><path fill="#f02ab0" d="M1.500 14L8 8v16l-6.500 8z"/><path fill="#3a45e8" d="M14 1.500h20L28 8H20z"/><path fill="#1fb6ff" d="M50.500 1.500v20L45 18V8zM1.500 50.500V36L8 38v6z"/><path fill="#120610" d="M7.500 8h37v36h-37z"/><text class="ij" x="11" y="26">IJ</text><path fill="#fff" d="M12.500 37h13v2.500h-13z"/></svg></span>
  <span class="app"><svg viewBox="0 0 52 52"><path fill="#f2b800" d="M26-3L18.500 18 26 29z"/><path fill="#b00a3c" d="M26-3l7.500 21L26 29z"/><path fill="#ff1656" d="M33.500 18l23.500 1L26 29z"/><path fill="#858585" d="M57 19L38.500 35 26 29z"/><path fill="#c9c9c9" d="M38.500 35L45 55 26 29z"/><path fill="#37076e" d="M45 55L26 44V29z"/><path fill="#973be8" d="M7 55l19-11V29z"/><path fill="#ffe41c" d="M7 55l6.500-20L26 29z"/><path fill="#ffc30b" d="M13.500 35L-5 19l31 10z"/><path fill="#ffe119" d="M-5 19l23.500-1L26 29z"/></svg></span>
  <i class="divider"></i>
  <span class="app run"><svg viewBox="0 0 52 52"><rect width="52" height="52" rx="12" fill="#f5f5f5"/><rect x="4.500" y="4.500" width="43" height="43" rx="7" fill="url(#gSky)"/><path fill="#244f8c" d="M4.500 28h43v13h-43z"/><path fill="#dce7ee" d="M4.500 39l9-4 8 2 5-5 8 4v11.500H10q-5-1-5.500-5z"/><path fill="#4e3d36" d="M5 37l5-3 4 3zM20 34l5-2v3z"/><path fill="#d3d8dc" stroke="#4a4a4a" d="M28 34h20l4.500 15q-.5 4-4 4h-22q-4 0-3-4z"/><path fill="#f7f9fb" d="M31 37h14l4 12H27z"/><path fill="#6f8197" d="M33 40l5-2 5 3-2 5-8-1zM37 42l3 1-3 2z"/><rect x="27" y="26" width="22" height="9.500" rx="3" fill="#0c0c0c"/></svg></span>
  <span class="app"><svg viewBox="0 0 52 52"><rect width="52" height="52" rx="12" fill="url(#gGreen)"/><rect x="8" y="14" width="25" height="24" rx="6" fill="url(#gWhite)"/><path fill="#e5f3e5" d="M35 24l7-7.500q2-1 2 1v17q0 2-2 1L35 28z"/></svg></span>
  <span class="app run"><svg viewBox="0 0 52 52"><circle cx="26" cy="26" r="29.300" fill="url(#gDisc)" stroke="#24435e"/><g fill="none" stroke="url(#gGate)" stroke-width="4"><path d="M-2 21H14M-2 31.500H14"/><path d="M35 26H48.500"/><path d="M11 16h9q10 0 16 10-6 10-16 10h-9q5-10 0-20z"/></g></svg></span>
  <i class="divider"></i>
  <span class="app docs"><svg viewBox="0 0 52 52"><path fill="#333" d="M7-2h4v57H7z"/><path fill="#f6f6f6" d="M9-3h26l9 4v54H9z"/><path stroke="#aaa" stroke-width=".8" d="M13 5h16M13 9h18M13 12h22M13 35h10M13 38h12M13 41h24M13 44h22"/><path fill="#858585" d="M11 20h23v10H11z"/><path fill="#d2d2d2" d="M24 22h8v6h-8z"/><path fill="#e4e4e4" stroke="#aaa" stroke-width=".6" d="M30-3v17q8 3 14 4Q32 10 30-3z"/></svg></span>
  <span class="app docs"><svg viewBox="0 0 52 52"><path fill="#fbfbfb" d="M-4-3h60v58H-4z"/><path fill="#1f53a8" d="M-4-3h60v3H-4z"/><path fill="#e9edf3" d="M-4 0h60v9H-4z"/><path stroke="#8aa5cf" stroke-dasharray="4 2 1 3" d="M-2 3h56M-2 6h52"/><path fill="#e7e7e7" d="M-4 9h9v45h-9zM47 9h9v45h-9z"/><path stroke="#999" stroke-width=".8" d="M10 12h28M10 14h32M10 18h30M10 20h33M10 22h32M10 24h10"/><rect x="36" y="36" width="18" height="18" rx="4" fill="#fff"/><path fill="#1f8ae3" d="M41 38h11v7H41z"/><path fill="#1546a8" d="M41 45h11v7H41z"/><path fill="#185abd" d="M37 41h8v8h-8z"/><text class="tiny" x="41" y="47.500" text-anchor="middle">W</text></svg></span>
  <span class="app"><svg viewBox="0 0 52 52"><path fill="#eee" d="M4 4l6-7 7 4 5-5 8 4 6-3 6 4 5 5-4 6H8z"/><path fill="#222" d="M9 1l3 4-4 2zM27-1l4 4-5 3zM40 0l4 5-5 1z"/><path fill="#22c6e8" d="M18 2h6v3h-6z"/><path fill="#e0653b" d="M32 3l5 1-4 3z"/><path fill="url(#gBin)" d="M3.500 3q22 9 45 0L43 48q-1 6-17 6T9.500 48z"/><ellipse cx="26" cy="4" rx="22.500" ry="4.500" fill="none" stroke="#a4a6a8" stroke-width=".8"/></svg></span>
</div>
</body>
</html>
```

FILE: styles.css
```css
* { box-sizing: border-box; }
body {
  margin: 0;
  width: 1440px;
  height: 900px;
  overflow: hidden;
  display: flex;
  flex-direction: column;
  background: linear-gradient(90deg, #4a000d, #32000a 50%, #48000b);
  font-family: "Noto Sans", sans-serif;
}
.defs { position: absolute; }
svg { overflow: visible; flex: none; }

.menubar {
  height: 25px;
  flex: none;
  display: flex;
  align-items: center;
  padding-left: 20px;
  background: linear-gradient(90deg, #1b426e, #1c2f66 22%, #1d1b57 38%, #1f1352 60%, #1f1250);
  border-bottom: 1px solid #07060f;
  color: #f0f1f5;
  font: 500 13px/24px Inter, sans-serif;
}
.apple { margin-top: 1px; }
.menus {
  display: grid;
  grid-template-columns: 63px 42px 45px 49px 53px 73px 40px;
  margin-left: 21px;
  white-space: nowrap;
  letter-spacing: -.15px;
}
.tray {
  margin-left: auto;
  display: grid;
  grid-template-columns: 38px 38px 36px 42px 36px 30px 34px 30px 32px 135px;
  align-items: center;
  justify-items: center;
}
.clock { justify-self: start; padding-left: 7px; white-space: pre; letter-spacing: 0; }

.window {
  height: 789px;
  flex: none;
  display: flex;
  flex-direction: column;
  background: #000;
  border-radius: 10px 10px 9px 9px;
  overflow: hidden;
}
.titlebar {
  height: 28px;
  flex: none;
  display: grid;
  grid-template-columns: 80px 1fr 80px;
  align-items: center;
  background: linear-gradient(90deg, #d2cfd3, #cfcccf 65%, #cbc6d6 75%, #cbc7d8 88%, #d3d0da);
}
.titlebar h1 { margin: -1px 0 0; text-align: center; font: 600 13px Inter, sans-serif; color: #3d3b3e; letter-spacing: .13px; }
.lights { display: flex; gap: 8px; padding-left: 8px; }
.lights i { width: 12px; height: 12px; border-radius: 50%; border: 1px solid; }
.red { background: #fe4741; border-color: #e5332d; }
.amber { background: #fdbb00; border-color: #e2a000; }
.green { background: #00cc26; border-color: #00b31c; }

.toolbar, .statusbar {
  height: 34px;
  flex: none;
  margin: 1px 0;
  display: flex;
  align-items: center;
  justify-content: space-between;
  background: linear-gradient(#3b3b3a, #11110f 95%);
  border: 1px solid #2e2e2c;
  border-top-color: #4b4b4a;
}
.tools { display: flex; align-items: center; padding-left: 3.500px; }
.tools.right { padding: 0 3.500px 0 0; }
.tool { width: 31px; height: 25px; display: flex; align-items: center; justify-content: center; }
.tool svg { width: 16px; height: 16px; }
.tool.selected { width: 24px; margin: 0 3.500px; background: linear-gradient(#0064b0, #003f8c); box-shadow: 0 0 0 1px #000b1e; border-radius: 1px; }
.sep { width: 1px; height: 21px; margin: 0 4px 0 2px; background: #b9bdb9; }
.help { font: bold 11px "Open Sans", sans-serif; fill: #fff; }

.workspace { height: 690px; flex: none; display: flex; }
.palette { width: 176px; background: #ced6dd; overflow: hidden; }
.group { display: grid; grid-template-columns: 85px 85px; padding: 0 3px 4px; row-gap: 8px; }
.gates { padding-top: 15px; row-gap: 9px; }
figure { margin: 0; }
figure svg { display: block; }
figcaption { height: 20px; line-height: 20px; text-align: center; font-size: 11.500px; color: #1c1c1c; white-space: nowrap; margin-left: -1px; letter-spacing: -.02px; }
.flops figcaption { letter-spacing: .18px; }
.palette h2 {
  margin: 0;
  height: 26px;
  display: flex;
  align-items: center;
  justify-content: space-between;
  padding: 0 5px 1px 9px;
  font: 700 13px/22px "Noto Sans", sans-serif;
  color: #e4e4e2;
  background: linear-gradient(#3c3c3a, #10100e);
  border-bottom: 1px solid #000;
  border-top: 1px solid #4a4a48;
}
.fold { width: 19px; height: 14px; margin-top: 1px; display: grid; place-items: center; background: linear-gradient(#0074d4, #004ea8); border: 1px solid #2f86d6; outline: 1px solid #000; }
.fold::after, .up::after { content: ""; border: 3px solid transparent; border-bottom: 4px solid #fff; border-top: 0; }
.down::after { content: ""; border: 3px solid transparent; border-top: 4px solid #fff; border-bottom: 0; }

.scrollbar { width: 14px; border-left: 1px solid #000; display: flex; flex-direction: column; gap: 1px; background: #000; }
.scrollbar i { width: 13px; display: grid; place-items: center; }
.up, .down { height: 14px; background: linear-gradient(90deg, #6a6a68, #50504e); }
.track { height: 251px; background: #373732; }
.thumb { flex: 1; background: linear-gradient(90deg, #6b6b66, #50504b); border: 1px solid #777772; border-left: 0; }
.splitter { width: 11px; padding: 296px 1px 0 2px; background: #000; }
.splitter i { height: 98px; width: 8px; display: grid; place-items: center; background: linear-gradient(#0a74cc, #00408f); border: 1px solid #0d5cab; }
.splitter i::after { content: ""; border: 3px solid transparent; border-right: 4px solid #fff; border-left: 0; }

.canvas { background: #dcdcdc; overflow: hidden; }
.grid-line { fill: #c9c9c9; }
.pin { fill: #fff; stroke: #222; stroke-width: 1; }
.lead { fill: none; stroke: #0a0a0a; stroke-width: 1.400; }
.body { fill: #fff; stroke: #0a0a0a; stroke-width: 1.300; }
.thin { stroke-width: 1.100; }
.line { fill: none; stroke: #0a0a0a; stroke-width: 1.300; }
.plead { fill: none; stroke: #0a0a0a; stroke-width: 1.200; }
.pout { fill: none; stroke: #444; stroke-width: 1.200; }
.pp { fill: #fff; stroke: #444; stroke-width: .9; }
.ff text { font: 500 6px "Noto Sans", sans-serif; fill: #333; }
.ff .chip { font-weight: 700; fill: #fff; font-size: 5px; }
.ff .bold { font-weight: 800; fill: #000; font-size: 6.500px; }
.edge, .core { fill: none; }
.off .edge { stroke: #1c1c1c; stroke-width: 4; }
.off .core { stroke: #fff; stroke-width: 2.400; }
.on .edge { stroke: #06203c; stroke-width: 4.400; }
.on .core { stroke: #007df2; stroke-width: 2.900; }
.clock-edge { fill: none; stroke: #0a0a0a; stroke-width: 3.400; }
.clock-core { fill: none; stroke: #fff; stroke-width: 1.400; }
.label rect { fill: #1c1c1c; }
.label .chosen { stroke: #0b6fd0; stroke-width: 1.200; rx: 1.500px; }
.label text { fill: #f2f2f2; font: 700 10px "Noto Sans", sans-serif; text-anchor: middle; }

.zoomer { display: flex; align-items: center; gap: 11px; padding-right: 12px; }
.slider { width: 100px; height: 4px; margin-right: -2px; background: #a3a39f; border-top: 1px solid #333; border-radius: 2px; display: flex; align-items: center; padding-left: 25px; }
.slider i { width: 11px; height: 11px; border-radius: 50%; background: #0063bd; border: 1px solid #001a55; }

.dock {
  width: 1291px;
  height: 79px;
  flex: none;
  margin: 2px 0 0 74px;
  padding: 10px 10px 0;
  display: flex;
  gap: 16px;
  border: 1px solid #7b444c;
  border-radius: 21px;
  background: linear-gradient(100deg, #50141d, #43151b 45%, #57131e 75%, #55121c);
}
.app { position: relative; width: 52px; height: 52px; flex: none; }
.app svg { width: 52px; height: 52px; display: block; }
.run::after { content: ""; position: absolute; left: 24px; top: 62px; width: 4px; height: 4px; border-radius: 50%; background: #cf8f99; }
.divider { width: 1px; height: 58px; margin: -1px 7px 0 8px; background: #84505a; flex: none; }
.divider + .app { margin-left: -1px; }
.badge { position: absolute; left: 36px; top: -5px; width: 23px; height: 23px; border-radius: 50%; background: #f5100f; color: #fff; text-align: center; font: 500 13px/23px Inter, sans-serif; }
.word { font: bold 14px Lato, sans-serif; fill: #fff; }
.ij { font: bold 20px "Liberation Mono", monospace; fill: #fff; letter-spacing: -1px; }
.tiny { font: bold 6px Lato, sans-serif; fill: #fff; }
```
